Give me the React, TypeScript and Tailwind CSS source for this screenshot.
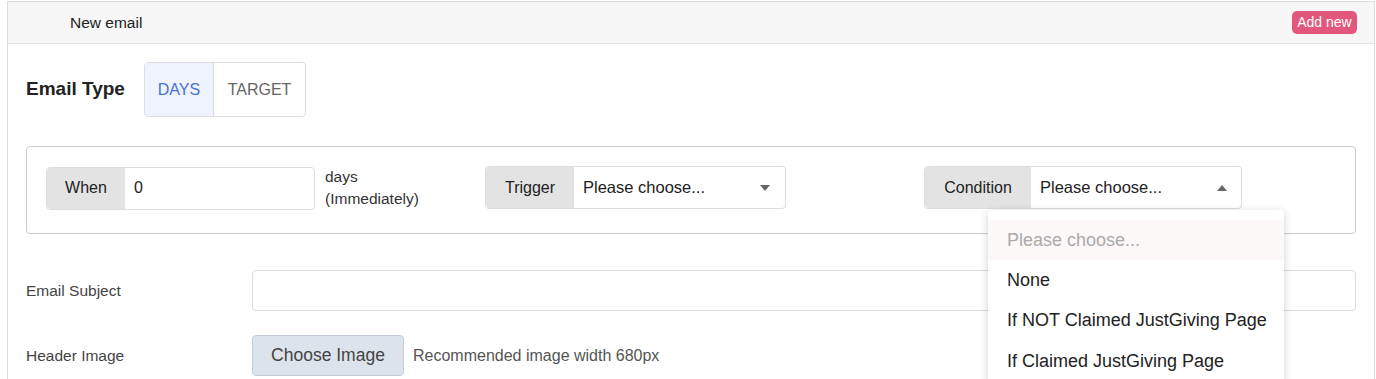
import React from "react";

const font = { fontFamily: '"Liberation Sans", Arial, sans-serif' };

function Caret({ up }: { up?: boolean }) {
  return (
    <span
      className={
        up
          ? "h-0 w-0 border-x-[5px] border-b-[6px] border-x-transparent border-b-[#666]"
          : "h-0 w-0 border-x-[5px] border-t-[6px] border-x-transparent border-t-[#666]"
      }
    />
  );
}

function Addon({ label, width }: { label: string; width: string }) {
  return (
    <div
      className={`${width} flex h-full items-center justify-center rounded-l-[4px] bg-[#e3e3e3] text-[16px] text-[#222]`}
    >
      {label}
    </div>
  );
}

const options = [
  "None",
  "If NOT Claimed JustGiving Page",
  "If Claimed JustGiving Page",
];

export default function App() {
  return (
    <div className="bg-white pl-[7px] pr-[1px] pt-[1px] text-[#333]" style={font}>
      <div className="relative h-[378px] border border-b-0 border-[#dddddd]">
        <div className="flex h-[42px] items-center justify-between border-b border-[#e4e4e4] bg-[#f7f7f7] pl-[62px] pr-[17px]">
          <span className="text-[15.5px] text-[#222]">New email</span>
          <button
            type="button"
            className="flex h-[23px] w-[65px] items-center justify-center rounded-[5px] bg-[#e3577c] text-[14px] text-white"
          >
            Add new
          </button>
        </div>

        <div className="px-[18px]">
          <div className="mt-[18px] flex items-center">
            <span className="w-[118px] text-[19px] font-bold text-[#222]">Email Type</span>
            <div className="flex h-[55px] overflow-hidden rounded-[4px] border border-[#dddddd]">
              <div className="flex w-[69px] items-center justify-center border-r border-[#dddddd] bg-[#eef3fd] text-[16px] text-[#4a72cf]">
                DAYS
              </div>
              <div className="flex w-[91px] items-center justify-center text-[16px] text-[#666]">
                TARGET
              </div>
            </div>
          </div>

          <div className="mt-[29px] flex h-[88px] items-start rounded-[4px] border border-[#cccccc] pl-[19px] pt-[19px]">
            <div className="flex w-[439px] items-center">
              <div className="flex h-[43px] w-[269px] rounded-[4px] border border-[#dddddd]">
                <Addon label="When" width="w-[78px]" />
                <div className="flex flex-1 items-center pl-[9px] text-[16px] text-[#222]">0</div>
              </div>
              <div className="ml-[10px] text-[15.5px] leading-[22px] text-[#333]">
                days
                <br />
                (Immediately)
              </div>
            </div>
            <div className="flex h-[43px] w-[301px] rounded-[4px] border border-[#dddddd]">
              <Addon label="Trigger" width="w-[88px]" />
              <div className="flex flex-1 items-center justify-between pl-[9px] pr-[15px] text-[16.5px] text-[#222]">
                Please choose...
                <Caret />
              </div>
            </div>
            <div className="ml-[138px] flex h-[43px] w-[318px] rounded-[4px] border border-[#dddddd]">
              <Addon label="Condition" width="w-[106px]" />
              <div className="flex flex-1 items-center justify-between pl-[9px] pr-[14px] text-[16.5px] text-[#222]">
                Please choose...
                <Caret up />
              </div>
            </div>
          </div>

          <div className="mt-[36px] flex items-center">
            <span className="w-[226px] text-[15.5px] text-[#444]">Email Subject</span>
            <div className="h-[41px] flex-1 rounded-[4px] border border-[#dddddd]" />
          </div>

          <div className="mt-[24px] flex items-center">
            <span className="w-[226px] text-[15.5px] text-[#444]">Header Image</span>
            <button
              type="button"
              className="h-[41px] w-[152px] rounded-[4px] border border-[#c3ccd6] bg-[#dde3ea] text-[17.5px] text-[#444]"
            >
              Choose Image
            </button>
            <span className="ml-[9px] text-[16px] text-[#555]">Recommended image width 680px</span>
          </div>
        </div>

        <div className="absolute left-[980px] top-[208px] z-10 w-[296px] rounded-[4px] bg-white pt-[10px] shadow-[0_2px_10px_rgba(0,0,0,0.18)]">
          <div className="flex h-[40px] items-center bg-[#fcf8f8] pl-[19px] text-[18px] text-[#aaa]">
            Please choose...
          </div>
          {options.map((o) => (
            <div key={o} className="flex h-[40.5px] items-center pl-[19px] text-[18px] text-[#222]">
              {o}
            </div>
          ))}
        </div>
      </div>
    </div>
  );
}
